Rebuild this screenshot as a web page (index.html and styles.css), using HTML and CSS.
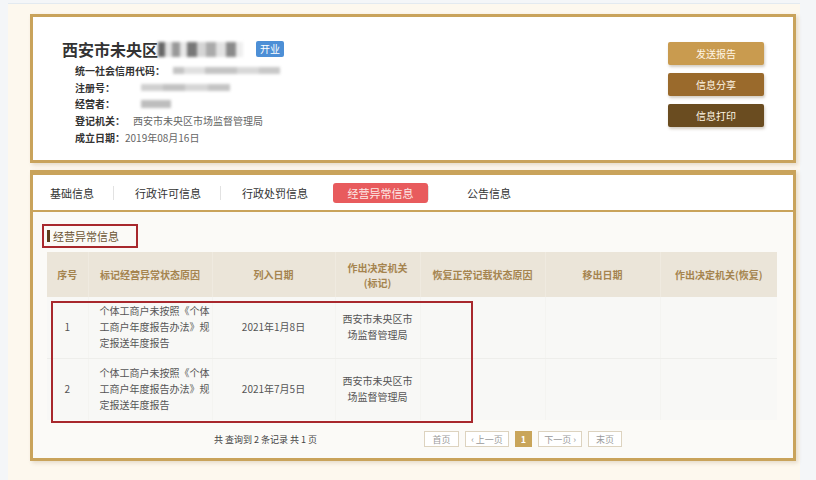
FILE: index.html
```html
<!DOCTYPE html>
<html lang="zh-CN">
<head>
<meta charset="utf-8">
<title>经营异常信息</title>
<link rel="stylesheet" href="styles.css">
</head>
<body>
<div class="page">
  <section class="card head-card">
    <div class="info">
      <h1 class="title">西安市未央区<span class="blur blur-title"></span><span class="badge">开业</span></h1>
      <div class="rows">
        <div class="row"><span class="label">统一社会信用代码：</span><span class="blur blur-code"></span></div>
        <div class="row"><span class="label">注册号：</span><span class="blur blur-reg"></span></div>
        <div class="row"><span class="label">经营者：</span><span class="blur blur-owner"></span></div>
        <div class="row"><span class="label">登记机关：</span><span class="value gap">西安市未央区市场监督管理局</span></div>
        <div class="row"><span class="label">成立日期：</span><span class="value">2019年08月16日</span></div>
      </div>
    </div>
    <div class="actions">
      <button class="btn btn-send">发送报告</button>
      <button class="btn btn-share">信息分享</button>
      <button class="btn btn-print">信息打印</button>
    </div>
  </section>

  <section class="card main-card">
    <nav class="tabs">
      <span class="tab">基础信息</span><i class="sep"></i>
      <span class="tab">行政许可信息</span><i class="sep"></i>
      <span class="tab">行政处罚信息</span>
      <span class="tab active">经营异常信息</span><i class="sep sep-after"></i>
      <span class="tab">公告信息</span>
    </nav>
    <div class="content">
      <div class="section-title"><i class="bar"></i>经营异常信息</div>
      <table class="grid">
        <colgroup>
          <col style="width:41px"><col style="width:124px"><col style="width:123px"><col style="width:85px"><col style="width:125px"><col style="width:115px"><col style="width:117px">
        </colgroup>
        <thead>
          <tr>
            <th>序号</th>
            <th>标记经营异常状态原因</th>
            <th>列入日期</th>
            <th>作出决定机关<br>(标记)</th>
            <th>恢复正常记载状态原因</th>
            <th>移出日期</th>
            <th>作出决定机关(恢复)</th>
          </tr>
        </thead>
        <tbody>
          <tr class="r1">
            <td>1</td>
            <td class="reason">个体工商户未按照《个体<br>工商户年度报告办法》规<br>定报送年度报告</td>
            <td class="c">2021年1月8日</td>
            <td class="c">西安市未央区市<br>场监督管理局</td>
            <td></td><td></td><td></td>
          </tr>
          <tr class="r2">
            <td>2</td>
            <td class="reason">个体工商户未按照《个体<br>工商户年度报告办法》规<br>定报送年度报告</td>
            <td class="c">2021年7月5日</td>
            <td class="c">西安市未央区市<br>场监督管理局</td>
            <td></td><td></td><td></td>
          </tr>
        </tbody>
      </table>
      <div class="footer">
        <span class="total">共 查询到 2 条记录 共 1 页</span>
        <div class="pager">
          <span class="pg w35">首页</span>
          <span class="pg w44">‹ 上一页</span>
          <span class="pg cur">1</span>
          <span class="pg w44">下一页 ›</span>
          <span class="pg w34">末页</span>
        </div>
      </div>
    </div>
    <div class="mark mark-title"></div>
    <div class="mark mark-rows"></div>
  </section>
</div>
</body>
</html>
```

FILE: styles.css
```css
* { box-sizing: border-box; }
html, body { margin: 0; padding: 0; }
body {
  background: #f4f6f8;
  font-family: "Noto Sans CJK SC", "Noto Sans", sans-serif;
  color: #333;
  width: 816px;
  height: 480px;
  overflow: hidden;
}
.page {
  margin: 3px 16px 0 8px;
  border-top: 1px solid #e3eaf0;
  background: #fdf8ee;
  padding: 10px 4px 20px 22px;
  height: 477px;
}
.card {
  background: #fff;
  border: 3px solid #c9a35b;
  box-shadow: 2px 2px 4px rgba(120, 90, 40, 0.18);
}
/* head card */
.head-card {
  height: 149px;
  display: flex;
  justify-content: space-between;
  padding: 22px 29px 0 29px;
}
.title {
  margin: 0;
  font-size: 16px;
  line-height: 20px;
  font-weight: 700;
  color: #333;
  display: flex;
  align-items: center;
}
.blur {
  display: inline-block;
  filter: blur(1.8px);
}
.blur-title {
  width: 85px;
  height: 15px;
  background: linear-gradient(90deg, #666 0 8%, #e2e2e2 8% 16%, #999 16% 26%, #e8e8e8 26% 34%, #777 34% 46%, #d5d5d5 46% 56%, #aaa 56% 68%, #e2e2e2 68% 80%, #8a8a8a 80% 92%, #eee 92%);
}
.badge {
  margin-left: 13px;
  background: #4d8fd6;
  color: #fff;
  font-size: 10px;
  font-weight: 400;
  line-height: 16px;
  padding: 0 4px;
  border-radius: 2px;
}
.rows { padding-left: 13px; margin-top: 3px; }
.row {
  display: flex;
  align-items: center;
  height: 16.75px;
  font-size: 10px;
}
.label { font-weight: 700; color: #333; }
.value { color: #666; }
.value.gap { margin-left: 8px; }
.blur-code { width: 107px; height: 7px; margin-left: 8px; background: linear-gradient(90deg, #c4c4c4 0 10%, #e0e0e0 10% 30%, #c4c4c4 30% 60%, #d8d8d8 60% 80%, #c8c8c8 80%); }
.blur-reg { width: 89px; height: 7px; margin-left: 26px; background: linear-gradient(90deg, #d0d0d0 0 25%, #c2c2c2 25% 50%, #d6d6d6 50% 75%, #c4c4c4 75%); }
.blur-owner { width: 30px; height: 8px; margin-left: 26px; background: #bdbdbd; }
.actions {
  display: flex;
  flex-direction: column;
  gap: 8px;
  margin-top: 3px;
}
.btn {
  width: 96px;
  height: 23px;
  border: 0;
  border-radius: 2px;
  font-family: inherit;
  font-size: 10px;
  color: #fff6e6;
  box-shadow: 1px 2px 3px rgba(80, 50, 10, 0.25);
  padding: 0;
}
.btn-send { background: #c99b4f; }
.btn-share { background: #9a6a2c; }
.btn-print { background: #6a4c20; }

/* main card */
.main-card {
  margin-top: 7px;
  height: 291px;
  border-top-width: 5px;
  position: relative;
  background: #fbfaf7;
}
.tabs {
  height: 37px;
  background: #fff;
  border-bottom: 2px solid #c9a35b;
  display: flex;
  align-items: center;
  padding-left: 17px;
  font-size: 11px;
  color: #333;
}
.tab { white-space: nowrap; line-height: 20px; }
.sep {
  display: block;
  width: 1px;
  height: 14px;
  background: #e2e2e2;
  margin: 0 21px 0 19px;
}
.sep-after { margin: 0 38px 0 0; }
.tab.active {
  margin-left: 25px;
  width: 95px;
  text-align: center;
  background: #e85b5d;
  color: #fde9e6;
  border-radius: 3px;
}
.content {
  padding: 12px 16px 0 14px;
}
.section-title {
  height: 24px;
  margin-bottom: 4px;
  display: flex;
  align-items: center;
  font-size: 11px;
  color: #6b5433;
}
.bar {
  display: block;
  width: 3px;
  height: 12px;
  background: #5b3f1c;
  margin-right: 3px;
}
.grid {
  width: 730px;
  border-collapse: collapse;
  table-layout: fixed;
  font-size: 10px;
}
.grid th {
  height: 45px;
  background: #ebe5d9;
  color: #a5844f;
  font-weight: 700;
  line-height: 15px;
  text-align: center;
  padding: 0;
  border-right: 1px solid #efeae0;
}
.grid th:last-child { border-right: 0; }
.grid td {
  background: #f8f8f6;
  color: #555;
  line-height: 16px;
  padding: 0;
  border-right: 1px solid #f4f4f1;
  border-bottom: 1px solid #eeeeeb;
  text-align: center;
}
.grid td:last-child { border-right: 0; }
.grid tr.r1 td { height: 61px; }
.grid tr.r2 td { height: 62px; border-bottom: 0; }
.grid td.reason { text-align: left; padding-left: 11px; white-space: nowrap; }
.footer {
  margin-top: 11px;
  height: 16px;
  display: flex;
  align-items: center;
  padding-left: 167px;
}
.total {
  width: 210px;
  font-size: 9px;
  color: #444;
  white-space: nowrap;
}
.pager { display: flex; gap: 6px; }
.pg {
  height: 16px;
  border: 1px solid #ddd3bf;
  background: #fff;
  color: #9a9a9a;
  font-size: 9px;
  display: flex;
  align-items: center;
  justify-content: center;
}
.w35 { width: 35px; }
.w44 { width: 44px; }
.w34 { width: 34px; }
.pg.cur {
  width: 17px;
  background: #c9a55a;
  border-color: #c9a55a;
  color: #fff;
  font-weight: 700;
}
.mark {
  position: absolute;
  border: 2px solid #a8282d;
}
.mark-title { left: 9px; top: 49px; width: 96px; height: 24px; }
.mark-rows { left: 18px; top: 126px; width: 422px; height: 122px; border-width: 2.5px; }
```
